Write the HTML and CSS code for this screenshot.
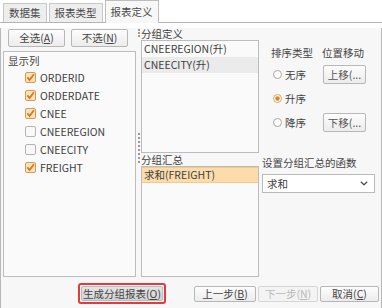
FILE: index.html
```html
<!DOCTYPE html>
<html>
	<head>
		<meta charset="UTF-8">
		<title>报表定义</title>
		<link rel="stylesheet" href="styles.css">
	</head>
	<body>
		<div class="dialog">
			<div class="tabs">
				<span class="tab">数据集</span>
				<span class="tab">报表类型</span>
				<span class="tab active">报表定义</span>
			</div>
			<div class="panel">
				<div class="main">
					<!-- 显示列 -->
					<div class="col-left">
						<div class="btn-row">
							<button class="btn btn-sel">全选(<u>A</u>)</button>
							<button class="btn btn-sel">不选(<u>N</u>)</button>
						</div>
						<div class="list list-cols">
							<div class="list-title">显示列</div>
							<div class="item"><svg class="cb" width="11" height="11" viewBox="0 0 11 11"><rect x="0.5" y="0.5" width="10" height="10" rx="1.5" fill="#fde4bf" stroke="#d39a55"/><path d="M2.4 5.4 L4.6 8.1 L8.9 2.2" fill="none" stroke="#d6791b" stroke-width="1.8"/></svg>ORDERID</div>
							<div class="item"><svg class="cb" width="11" height="11" viewBox="0 0 11 11"><rect x="0.5" y="0.5" width="10" height="10" rx="1.5" fill="#fde4bf" stroke="#d39a55"/><path d="M2.4 5.4 L4.6 8.1 L8.9 2.2" fill="none" stroke="#d6791b" stroke-width="1.8"/></svg>ORDERDATE</div>
							<div class="item"><svg class="cb" width="11" height="11" viewBox="0 0 11 11"><rect x="0.5" y="0.5" width="10" height="10" rx="1.5" fill="#fde4bf" stroke="#d39a55"/><path d="M2.4 5.4 L4.6 8.1 L8.9 2.2" fill="none" stroke="#d6791b" stroke-width="1.8"/></svg>CNEE</div>
							<div class="item"><svg class="cb" width="11" height="11" viewBox="0 0 11 11"><rect x="0.5" y="0.5" width="10" height="10" rx="1.5" fill="#f8f8f8" stroke="#b4b4b4"/></svg>CNEEREGION</div>
							<div class="item"><svg class="cb" width="11" height="11" viewBox="0 0 11 11"><rect x="0.5" y="0.5" width="10" height="10" rx="1.5" fill="#f8f8f8" stroke="#b4b4b4"/></svg>CNEECITY</div>
							<div class="item"><svg class="cb" width="11" height="11" viewBox="0 0 11 11"><rect x="0.5" y="0.5" width="10" height="10" rx="1.5" fill="#fde4bf" stroke="#d39a55"/><path d="M2.4 5.4 L4.6 8.1 L8.9 2.2" fill="none" stroke="#d6791b" stroke-width="1.8"/></svg>FREIGHT</div>
						</div>
					</div>

					<!-- 分隔条 -->
					<div class="splitter">
						<span class="grip grip-top"></span>
						<span class="grip grip-mid"></span>
					</div>

					<!-- 分组定义 / 分组汇总 -->
					<div class="col-mid">
						<div class="label label-def">分组定义</div>
						<div class="list list-def">
							<div class="row">CNEEREGION(升)</div>
							<div class="row row-gray">CNEECITY(升)</div>
						</div>
						<div class="label label-sum">分组汇总</div>
						<div class="list list-sum">
							<div class="row row-orange">求和(FREIGHT)</div>
						</div>
					</div>

					<!-- 排序 -->
					<div class="col-right">
						<div class="sort">
							<div class="head">排序类型</div>
							<div class="head">位置移动</div>
							<div class="radio"><svg width="9" height="9" viewBox="0 0 9 9"><circle cx="4.5" cy="4.5" r="4" fill="#fff" stroke="#a5a5a5"/></svg>无序</div>
							<div class="cell"><button class="btn btn-move">上移(...</button></div>
							<div class="radio"><svg width="9" height="9" viewBox="0 0 9 9"><circle cx="4.5" cy="4.5" r="4" fill="#fff" stroke="#dca466"/><circle cx="4.5" cy="4.5" r="2.2" fill="#e0821f"/></svg>升序</div>
							<div class="cell"></div>
							<div class="radio"><svg width="9" height="9" viewBox="0 0 9 9"><circle cx="4.5" cy="4.5" r="4" fill="#fff" stroke="#a5a5a5"/></svg>降序</div>
							<div class="cell"><button class="btn btn-move">下移(...</button></div>
						</div>
						<div class="func-label">设置分组汇总的函数</div>
						<div class="select">
							<span>求和</span>
							<svg width="8" height="5" viewBox="0 0 8 5"><path d="M0.8 0.8 L4 3.8 L7.2 0.8" fill="none" stroke="#555" stroke-width="1.3"/></svg>
						</div>
					</div>
				</div>

				<div class="bottom">
					<span class="mark"><button class="btn btn-gen">生成分组报表(<u>O</u>)</button></span>
					<button class="btn btn-prev">上一步(<u>B</u>)</button>
					<button class="btn btn-next" disabled>下一步(<u>N</u>)</button>
					<button class="btn btn-cancel">取消(<u>C</u>)</button>
				</div>
			</div>
		</div>
	</body>
</html>
```

FILE: styles.css
```css
*{
	margin: 0;
	padding: 0;
	box-sizing: border-box;
}
body{
	background-color: #fff;
	font-family: "Noto Sans CJK SC", "Liberation Sans", sans-serif;
	font-size: 10.5px;
	color: #3f3f3f;
}
u{
	text-decoration: underline;
}
.dialog{
	width: 382px;
	height: 308px;
}
/* 标签页 */
.tabs{
	height: 23px;
	display: flex;
	align-items: flex-end;
	gap: 2px;
	padding-left: 3px;
	border-bottom: 1px solid #b4b4b4;
}
.tab{
	height: 19px;
	line-height: 18px;
	padding: 0 5px;
	border: 1px solid #c6c6c6;
	border-bottom: none;
	background-color: #eeeeee;
	color: #4a4a4a;
}
.tab.active{
	height: 23px;
	line-height: 21px;
	margin-bottom: -1px;
	background-color: #f7f7f7;
	border-color: #bdbdbd;
}
.panel{
	height: 284px;
	border: 1px solid #b9b9b9;
	border-top: none;
	border-radius: 0 0 5px 5px;
	background-color: #f7f7f7;
	padding-left: 2px;
}
.main{
	display: grid;
	grid-template-columns: 133px 5px 118px 1fr;
	height: 249px;
	margin-top: 5px;
}
/* 按钮 */
.btn{
	font-family: inherit;
	font-size: 10.5px;
	color: #444;
	border: 1px solid #b7b7b7;
	border-radius: 2px;
	background: linear-gradient(#fdfdfd, #ececec);
	text-align: center;
}
.btn u{
	text-underline-offset: 1px;
}
.col-left{
	display: flex;
	flex-direction: column;
}
.btn-row{
	display: flex;
	gap: 6px;
	margin-top: 1px;
	padding-left: 5px;
}
.btn-sel{
	width: 57px;
	height: 18px;
	line-height: 16px;
}
.list{
	border: 1px solid #bcbcbc;
	background-color: #fafafa;
}
.list-cols{
	flex: 1;
	margin-top: 4px;
}
.list-title{
	height: 15px;
	line-height: 15px;
	padding-left: 4px;
	margin-top: 1px;
	color: #444;
}
.item{
	height: 18px;
	display: flex;
	align-items: center;
	padding-left: 21px;
	gap: 4px;
	font-size: 10.5px;
}
.cb{
	flex-shrink: 0;
}
/* 分隔条 */
.splitter{
	display: flex;
	flex-direction: column;
	align-items: center;
}
.grip{
	border-left: 2px dotted #9a9a9a;
}
.grip-top{
	height: 8px;
	margin-top: 1px;
}
.grip-mid{
	height: 30px;
	margin-top: 96px;
}
/* 中间 */
.col-mid{
	display: flex;
	flex-direction: column;
}
.label{
	line-height: 12px;
}
.label-def{
	height: 12px;
}
.label-sum{
	height: 13px;
	line-height: 13px;
}
.list-def{
	height: 113px;
}
.list-sum{
	height: 111px;
}
.row{
	height: 16px;
	line-height: 16px;
	padding-left: 2px;
}
.row-gray{
	background-color: #ebebeb;
}
.row-orange{
	background-color: #fcdcab;
	border-top: 1px solid #f3c98b;
	border-bottom: 1px solid #f3c98b;
	line-height: 14px;
}
/* 右侧 */
.sort{
	display: grid;
	grid-template-columns: 51px 1fr;
	grid-template-rows: 15px 24px 24px 24px;
	margin-top: 19px;
	margin-left: 12px;
}
.head{
	line-height: 12px;
	color: #444;
}
.radio{
	display: flex;
	align-items: center;
	gap: 3px;
	padding-left: 2px;
	color: #444;
}
.cell{
	display: flex;
	align-items: center;
}
.btn-move{
	width: 43px;
	height: 19px;
	line-height: 17px;
	margin-left: 1px;
	color: #555;
}
.func-label{
	margin-top: 23px;
	margin-left: 3px;
	line-height: 12px;
	color: #444;
}
.select{
	width: 113px;
	height: 19px;
	margin-top: 5px;
	margin-left: 3px;
	border: 1px solid #bbbbbb;
	background-color: #fff;
	display: flex;
	align-items: center;
	justify-content: space-between;
	padding: 0 6px 0 4px;
}
/* 底部 */
.bottom{
	display: flex;
	justify-content: flex-end;
	align-items: center;
	gap: 2px;
	height: 21px;
	margin-top: 6px;
	padding-right: 2px;
}
.mark{
	display: flex;
	border: 2px solid #e23a3e;
	border-radius: 3px;
	padding: 1px;
	margin-right: 26px;
}
.btn-gen{
	width: 82px;
	height: 15px;
	line-height: 13px;
	background: linear-gradient(#e4e4e4, #d3d3d3);
	border-color: #bdbdbd;
}
.btn-prev,
.btn-next,
.btn-cancel{
	height: 16px;
	line-height: 14px;
}
.btn-prev{
	width: 62px;
}
.btn-next{
	width: 60px;
	color: #b9b9b9;
	border-color: #d6d6d6;
	background: #f3f3f3;
}
.btn-cancel{
	width: 59px;
}
```
